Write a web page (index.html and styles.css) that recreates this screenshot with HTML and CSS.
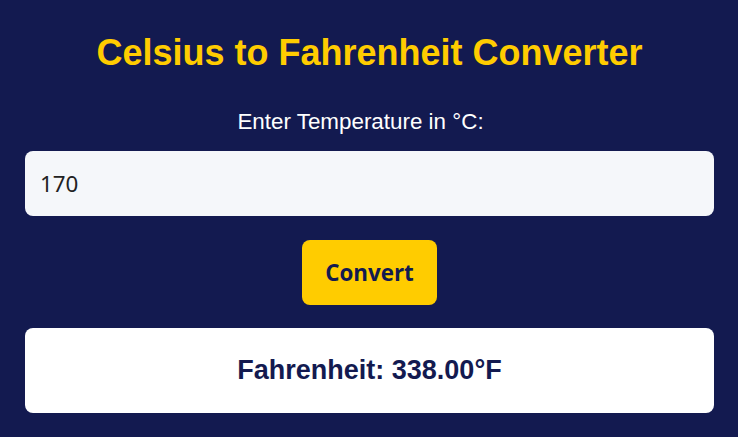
FILE: index.html
```html
<!DOCTYPE html>
<html>
<head>
<meta charset="utf-8">
<link rel="stylesheet" href="styles.css">
</head>
<body>
<main class="app">
  <h1 class="title">Celsius to Fahrenheit Converter</h1>
  <label class="label" for="c">Enter Temperature in °C:</label>
  <input class="field" id="c" type="text" value="170">
  <button class="btn" type="button">Convert</button>
  <div class="result">Fahrenheit: 338.00°F</div>
</main>
</body>
</html>
```
FILE: styles.css
```css
html, body {
  margin: 0;
  padding: 0;
  background: #131a50;
  height: 100%;
}
.app {
  display: flex;
  flex-direction: column;
  align-items: center;
  padding: 32px 24px 0 25px;
  font-family: "Liberation Sans", Arial, sans-serif;
}
.title {
  margin: 0;
  font-size: 36px;
  line-height: 41px;
  font-weight: bold;
  color: #ffcc00;
}
.label {
  margin-top: 36px;
  margin-right: 18px;
  font-size: 22.4px;
  line-height: 26px;
  color: #ffffff;
}
.field {
  box-sizing: border-box;
  margin-top: 16px;
  width: 100%;
  height: 65px;
  border: none;
  border-radius: 8px;
  background: #f5f7fa;
  padding: 0 15px;
  font-family: "Noto Sans", "Open Sans", sans-serif;
  font-size: 22.4px;
  color: #222;
  outline: none;
}
.btn {
  margin-top: 24px;
  width: 135px;
  height: 65px;
  border: none;
  border-radius: 8px;
  background: #ffcc00;
  color: #131a50;
  font-family: "Open Sans", "Noto Sans", sans-serif;
  font-weight: bold;
  font-size: 22.4px;
}
.result {
  box-sizing: border-box;
  margin-top: 23px;
  width: 100%;
  height: 85px;
  border-radius: 8px;
  background: #ffffff;
  display: flex;
  align-items: center;
  justify-content: center;
  font-size: 27px;
  font-weight: bold;
  color: #131a50;
}
```
